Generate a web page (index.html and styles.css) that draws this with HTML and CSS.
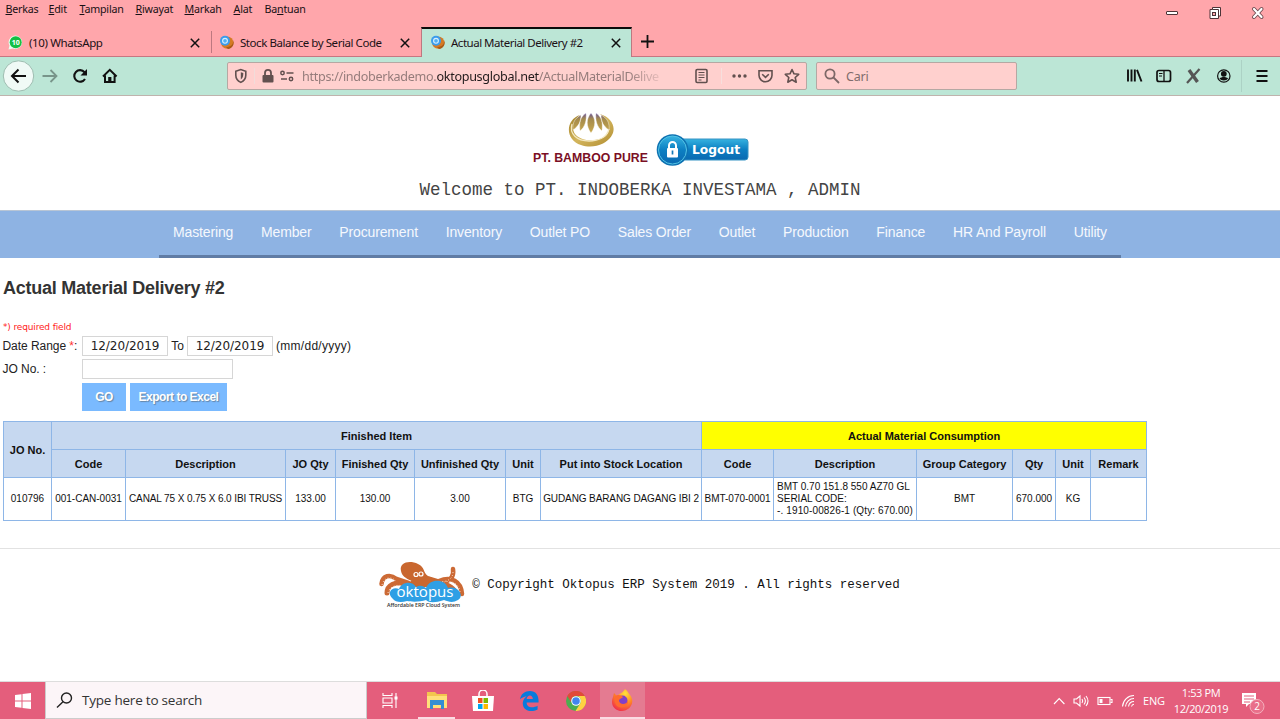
FILE: index.html
```html
<!DOCTYPE html>
<html lang="id">
<head>
<meta charset="utf-8">
<title>Actual Material Delivery #2</title>
<link rel="stylesheet" href="styles.css">
</head>
<body>
<svg class="defs" width="0" height="0" aria-hidden="true">
  <defs>
    <linearGradient id="gold" x1="0" y1="0" x2="1" y2="1"><stop offset="0" stop-color="#a07f28"/><stop offset=".5" stop-color="#d3b55c"/><stop offset="1" stop-color="#b08c30"/></linearGradient>
    <linearGradient id="leaf" x1="0" y1="0" x2="0" y2="1"><stop offset="0" stop-color="#67529b"/><stop offset=".3" stop-color="#a48a4c"/><stop offset="1" stop-color="#c9a84c"/></linearGradient>
    <linearGradient id="blue" x1="0" y1="0" x2="0" y2="1"><stop offset="0" stop-color="#36b2e0"/><stop offset=".5" stop-color="#0c7fc2"/><stop offset="1" stop-color="#0a69b1"/></linearGradient>
    <radialGradient id="fire" cx=".65" cy=".2" r=".9"><stop offset="0" stop-color="#ffe03c"/><stop offset=".5" stop-color="#ff8a25"/><stop offset="1" stop-color="#ef2450"/></radialGradient>
    <symbol id="x" viewBox="0 0 10 10"><path d="M.8.8l8.4 8.4M9.2.8L.8 9.2" stroke="#111" stroke-width="1.5"/></symbol>
    <symbol id="fav" viewBox="0 0 15 15"><circle cx="8.2" cy="7.600" r="6.200" fill="#d57a24"/><path d="M9 14a6.200 6.200 0 0 0 5-9c1 5-3 7-7 7z" fill="#a95a16"/><circle cx="6" cy="5.800" r="5" fill="#3b9cec"/><circle cx="6" cy="5.800" r="2.400" fill="#4fb0f5" stroke="#d7efff" stroke-width="1.100"/></symbol>
  </defs>
</svg>

<header class="browser">
  <div class="menubar">
    <nav class="menus">
      <span><u>B</u>erkas</span><span><u>E</u>dit</span><span><u>T</u>ampilan</span><span><u>R</u>iwayat</span><span><u>M</u>arkah</span><span><u>A</u>lat</span><span>Ba<u>n</u>tuan</span>
    </nav>
    <svg class="winbtns" width="104" height="16" viewBox="0 0 104 16">
      <rect x="3.500" y="6.500" width="11" height="3" rx=".5" fill="#fff" stroke="#4d3438"/>
      <path d="M49.500 2.500h8v8.500h-2v2.500h-8.500v-9h2.500z" fill="#fff" stroke="#4d3438"/><path d="M49.500 4.500h6v6.500" fill="none" stroke="#4d3438"/><rect x="49.500" y="7.500" width="3" height="3" fill="#ffa6ab" stroke="#4d3438"/>
      <path d="M91 4l7.500 8m0-8l-7.500 8" stroke="#6d4b50" stroke-width="4" stroke-linecap="round"/><path d="M91 4l7.500 8m0-8l-7.500 8" stroke="#fff" stroke-width="2.200" stroke-linecap="round"/>
    </svg>
  </div>

  <div class="tabs">
    <div class="tab tab-first">
      <svg class="fav" viewBox="0 0 15 15"><path d="M.5 14.500l1-4A6.700 6.700 0 1 1 5 13.500z" fill="#eafff0"/><circle cx="7.700" cy="7.200" r="6" fill="#12bf43"/><text x="7.700" y="9.900" text-anchor="middle" class="badge10">10</text></svg>
      <span class="title t-wa">(10) WhatsApp</span><svg class="close"><use href="#x"/></svg>
    </div>
    <div class="tab">
      <svg class="fav"><use href="#fav"/></svg><span class="title t-stock">Stock Balance by Serial Code</span><svg class="close"><use href="#x"/></svg>
    </div>
    <div class="tab active">
      <svg class="fav"><use href="#fav"/></svg><span class="title t-act">Actual Material Delivery #2</span><svg class="close"><use href="#x"/></svg>
    </div>
    <svg class="plus" viewBox="0 0 13 13"><path d="M6.500 0v13M0 6.500h13" stroke="#111" stroke-width="1.800"/></svg>
  </div>

  <div class="toolbar">
    <svg class="navicons" width="130" height="38" viewBox="0 0 130 38" fill="none">
      <circle cx="18.500" cy="19" r="15.200" fill="#f0faf6" stroke="#9dbdb0"/>
      <path d="M26 19H12.500M18.500 12.500L12 19l6.500 6.500" stroke="#111" stroke-width="2"/>
      <path d="M42.500 19H56M50.500 13l6 6-6 6" stroke="#78958a" stroke-width="1.800"/>
      <path d="M84.500 15.200A5.800 5.800 0 1 0 85 22" stroke="#111" stroke-width="2.100"/><path d="M87 12v6.500h-6.500z" fill="#111"/>
      <path d="M103 19.500l6.800-6.700 6.800 6.700M105 18.500V25h9.600v-6.500" stroke="#111" stroke-width="2"/><path d="M108.200 25v-5h3.200v5z" fill="#111"/>
    </svg>
    <div class="urlbar">
      <svg width="64" height="26" viewBox="0 0 64 26" fill="none" stroke="#62504f">
        <path d="M7.800 8.200l5-1.700 5 1.700v4c0 3.600-2.200 5.800-5 7.200-2.800-1.400-5-3.600-5-7.200z" stroke-width="1.600"/><path d="M12.800 9.300v7.200c2-1.300 2.500-3 2.500-6.400z" fill="#62504f" stroke="none"/>
        <path d="M26.500 5v16" stroke="#f1dcda"/>
        <rect x="34.500" y="12" width="11" height="7.500" rx="1" fill="#62504f" stroke="none"/><path d="M37 12V9.800a3 3 0 0 1 6 0V12" stroke-width="1.800"/>
        <circle cx="54.500" cy="10" r="1.700" stroke-width="1.500"/><path d="M58.500 10h7M53 16h6" stroke-width="1.700"/><circle cx="63" cy="16" r="1.700" stroke-width="1.500"/>
      </svg>
      <div class="url">https://indoberkademo.<b>oktopusglobal.net</b>/ActualMaterialDelive</div>
      <svg class="urlicons" width="112" height="26" viewBox="0 0 112 26" fill="none" stroke="#62504f" stroke-width="1.600">
        <rect x="2" y="6.500" width="11" height="13" rx="1.200"/><path d="M4.500 9.500h6M4.500 12h6M4.500 14.500h6M4.500 17h3" stroke-width="1"/>
        <path d="M27.500 5v16" stroke="#f7dfdd" stroke-width="1"/>
        <g fill="#62504f" stroke="none"><circle cx="40" cy="13" r="1.700"/><circle cx="45.500" cy="13" r="1.700"/><circle cx="51" cy="13" r="1.700"/></g>
        <path d="M65 7.800h13v4.500a6.500 6.500 0 0 1-13 0zM68.200 11.200l3.300 3.200 3.300-3.200"/>
        <path d="M98 6.500l2 4.300 4.700.5-3.500 3.200 1 4.700-4.200-2.400-4.200 2.400 1-4.700-3.500-3.200 4.700-.5z" stroke-linejoin="round"/>
      </svg>
    </div>
    <div class="searchbar">
      <svg width="16" height="16" viewBox="0 0 16 16" fill="none" stroke="#7d6867" stroke-width="1.800"><circle cx="6" cy="6" r="4.600"/><path d="M9.500 9.500l5.500 5.500"/></svg>
      <span>Cari</span>
    </div>
    <svg class="toolicons" width="155" height="38" viewBox="0 0 155 38" fill="none" stroke="#111">
      <path d="M3 12.500v12M6.500 12.500v12M9.800 12.500v12M12 12.800l4.500 11.700" stroke-width="1.900"/>
      <rect x="32" y="13.500" width="13.500" height="11" rx="2" stroke-width="1.700"/><path d="M39 13v11.500" stroke-width="1.300"/><path d="M34 16.500h3.500M34 19h3" stroke-width="1"/>
      <path d="M64 13L72.500 25" stroke="#555" stroke-width="3.400"/><path d="M74.500 12L62 26" stroke="#555" stroke-width="2.200"/>
      <circle cx="98.800" cy="19" r="6.200" stroke-width="1.200"/><circle cx="98.800" cy="16.800" r="2.900" fill="#111" stroke="none"/><path d="M94.500 21.500c2-2 6.600-2 8.600 0-1.500 2.600-7 2.600-8.600 0z" fill="#111" stroke="none"/>
      <path d="M116.500 3v32" stroke="#acd2c5"/>
      <path d="M131.500 14h11M131.500 19h11M131.500 24h11" stroke-width="1.900"/>
    </svg>
  </div>
</header>

<main class="page">
  <div class="brand">
    <div class="company">
      <svg width="50" height="36" viewBox="0 0 50 36">
        <path fill-rule="evenodd" d="M14 3C-1 8-1 28 15 33c7 2.500 15 2 22-1.500C53 23 50 7 34 2c7 6 11 12 8 19-5 9-26 10-33 1-4-6-2-13 5-19z" fill="url(#gold)"/>
        <path d="M6 12c-3 10 5 17 17 17 10 0 18-4 20-12" fill="none" stroke="#f3e8c1" stroke-width="1.300"/>
        <path d="M25 1c-5 6-5 13 0 20 5-7 5-14 0-20zM20 1c-6 4-7 10-6 18 5-4 7-11 6-18zM30 1c6 4 7 10 6 18-5-4-7-11-6-18zM15 3C9 6 6 11 7 18c6-4 8-9 8-15zM35 3c6 3 9 8 8 15-6-4-8-9-8-15z" fill="url(#leaf)" stroke="#fff" stroke-width=".4"/>
      </svg>
      <svg class="company-name" width="116" height="17" viewBox="0 0 116 17"><text x="0" y="13.500" textLength="115" lengthAdjust="spacingAndGlyphs">PT. BAMBOO PURE</text></svg>
    </div>
    <svg class="logout" width="94" height="34" viewBox="0 0 94 34">
      <rect x="18" y="6" width="74" height="21" rx="3" fill="url(#blue)" stroke="#3794c4"/>
      <circle cx="16.500" cy="17" r="15.800" fill="#0e72b2"/><circle cx="16.500" cy="17" r="14" fill="url(#blue)" stroke="#53c3e5" stroke-width="1"/>
      <rect x="11" y="15" width="11" height="9.500" rx="1" fill="#fff"/><path d="M13 15v-2.500a3.500 3.500 0 0 1 7 0V15" fill="none" stroke="#fff" stroke-width="2"/><path d="M16.500 17.500v4" stroke="#1479b8" stroke-width="1.700"/>
      <text x="36" y="21.300" class="logout-text" textLength="48" lengthAdjust="spacingAndGlyphs">Logout</text>
    </svg>
  </div>
  <div class="welcome">Welcome to PT. INDOBERKA INVESTAMA , ADMIN</div>

  <nav class="mainnav">
    <div class="navlist">
      <a>Mastering</a><a>Member</a><a>Procurement</a><a>Inventory</a><a>Outlet PO</a><a>Sales Order</a><a>Outlet</a><a>Production</a><a>Finance</a><a>HR And Payroll</a><a>Utility</a>
    </div>
  </nav>

  <section class="content">
    <h1>Actual Material Delivery #2</h1>
    <div class="required">*) required field</div>
    <div class="form">
      <div class="row"><label>Date Range <i>*</i>:</label><span class="field date">12/20/2019</span><span class="to">To</span><span class="field date">12/20/2019</span><span class="hint">(mm/dd/yyyy)</span></div>
      <div class="row"><label>JO No. :</label><span class="field jo"></span></div>
      <div class="row buttons"><button class="go">GO</button><button class="export">Export to Excel</button></div>
    </div>
    <table class="report">
      <colgroup><col class="w48"><col class="w74"><col class="w160"><col class="w50"><col class="w79"><col class="w91"><col class="w35"><col class="w161"><col class="w72"><col class="w143"><col class="w96"><col class="w43"><col class="w35"><col class="w56"></colgroup>
      <tr class="head"><th rowspan="2">JO No.</th><th colspan="7">Finished Item</th><th colspan="6" class="yellow">Actual Material Consumption</th></tr>
      <tr class="head"><th>Code</th><th>Description</th><th>JO Qty</th><th>Finished Qty</th><th>Unfinished Qty</th><th>Unit</th><th>Put into Stock Location</th><th>Code</th><th>Description</th><th>Group Category</th><th>Qty</th><th>Unit</th><th>Remark</th></tr>
      <tr class="data"><td>010796</td><td>001-CAN-0031</td><td class="tight">CANAL 75 X 0.75 X 6.0 IBI TRUSS</td><td>133.00</td><td>130.00</td><td>3.00</td><td>BTG</td><td class="tight">GUDANG BARANG DAGANG IBI 2</td><td>BMT-070-0001</td><td class="left">BMT 0.70 151.8 550 AZ70 GL<br>SERIAL CODE:<br><span class="wide">-. 1910-00826-1 (Qty: 670.00)</span></td><td>BMT</td><td>670.000</td><td>KG</td><td></td></tr>
    </table>
  </section>

  <footer class="foot">
    <svg class="octo" width="88" height="50" viewBox="0 0 88 50">
      <g fill="none" stroke="#cc6a35" stroke-linecap="round"><path d="M2.500 23c1-9 9-10 15-5l12 4" stroke-width="4.500"/><path d="M8 32c0-8 8-12 18-9" stroke-width="5"/><path d="M50 18c10 6 26 4 24-10" stroke-width="4.500"/><path d="M60 20c12-5 22 0 23 13" stroke-width="4.500"/><path d="M56 22c12 0 18 4 22 11" stroke-width="5"/><path d="M31 25l4-5M40 25l2-6" stroke-width="5"/></g>
      <path d="M3 24c2-8 9-9 14-4M9 32c1-6 8-9 15-7M74 11c0 8-8 11-16 9M81 31c-1-8-8-12-16-10" fill="none" stroke="#f6d9c6" stroke-width="1" stroke-dasharray="1 2"/>
      <path d="M22 10C20 1 31-1 39 3c7 3 5 9 10 12l10 3 2 8H26l7-6c-7-3-10-5-11-10z" fill="#c9672f"/>
      <circle cx="37" cy="13.500" r="2" fill="none" stroke="#fff" stroke-width="1.200"/><circle cx="42" cy="13" r="2" fill="none" stroke="#fff" stroke-width="1.200"/>
      <path d="M14 38c-7-6-1-13 6-10 3-8 14-8 17-2 5-3 9 0 10 1 4-10 19-9 22 0 10-3 17 8 10 12-5 3-9 2-14 0-9 3-15 3-18 0-6 2-14 2-19 1-6 2-12 1-14-2z" fill="#2e9fe5"/>
      <text x="17.500" y="36" class="okto" textLength="57" lengthAdjust="spacingAndGlyphs">oktopus</text>
      <text x="8" y="46" class="tagline" textLength="73" lengthAdjust="spacingAndGlyphs">Affordable ERP Cloud System</text>
    </svg>
    <span>© Copyright Oktopus ERP System 2019 . All rights reserved</span>
  </footer>
</main>

<div class="taskbar">
  <div class="start"><svg width="16" height="16" viewBox="0 0 16 16" fill="#fff"><path d="M0 2l6.500-.8v6.300H0zM7.500 1L16 0v7.500H7.500zM0 8.500h6.500v6.300L0 14zM7.500 8.500H16V16l-8.500-1z"/></svg></div>
  <div class="tasksearch"><svg width="17" height="17" viewBox="0 0 17 17" fill="none" stroke="#222" stroke-width="1.400"><circle cx="10.500" cy="6" r="5"/><path d="M7 9.700L1 15.500"/></svg><span>Type here to search</span></div>
  <div class="app"><svg width="16" height="15" viewBox="0 0 16 15" fill="none" stroke="#fff"><path d="M1 0v2.500h9V0M1 15v-2.500h9V15M1 5h9v5H1zM14 0v15" stroke-width="1.100"/><rect x="12.500" y="3.500" width="3" height="3" fill="#fff" stroke="none"/></svg></div>
  <div class="app running"><svg width="20" height="19" viewBox="0 0 20 19"><path d="M0 1h8l2 2h10v14H0z" fill="#f3c64e"/><path d="M0 5h20v12H0z" fill="#ffe07a"/><path d="M3 9h14v9h-3v-4H6v4H3z" fill="#358ed4"/></svg></div>
  <div class="app"><svg width="22" height="22" viewBox="0 0 22 22"><path d="M7 7V4a4 4 0 0 1 8 0v3" fill="none" stroke="#fff" stroke-width="1.500"/><path d="M0 6h22l-1 15H1z" fill="#fff"/><path d="M6 8h4.500v5H6z" fill="#f25022"/><path d="M11.500 8H16v5h-4.500z" fill="#7fba00"/><path d="M6 14h4.500v5H6z" fill="#00a4ef"/><path d="M11.500 14H16v5h-4.500z" fill="#ffb900"/></svg></div>
  <div class="app"><svg width="19" height="20" viewBox="0 0 20 21"><path d="M0 9C1 3 5 0 10.500 0 17 0 20 5 19.500 12H7c0 6 7 6 11.500 3.500v4C12 23 2 21 3 12c.4-3 2-5 4-6.500C4 6 1.500 7 0 9zm7-.5h6.500c0-5-6-5-6.500 0z" fill="#087bdc"/></svg></div>
  <div class="app"><svg width="20" height="20" viewBox="0 0 20 20"><circle cx="10" cy="10" r="10" fill="#4cad50"/><path d="M1.300 5A10 10 0 0 1 18.700 5H10a5 5 0 0 0-4.500 7z" fill="#e24a38"/><path d="M18.700 5A10 10 0 0 1 9.500 20l5-8c1-3 0-5-2.500-7z" fill="#ffd142"/><circle cx="10" cy="10" r="4.800" fill="#fff"/><circle cx="10" cy="10" r="3.800" fill="#4285ef"/></svg></div>
  <div class="app current"><svg width="22" height="22" viewBox="0 0 22 22"><path d="M14 0c3 2 3 4 5 6 6 8-1 16-8 16C3 22-1 15 2 8l1-4 3 3c3-3 6-3 8-7z" fill="url(#fire)"/><circle cx="11.500" cy="11.500" r="5" fill="#8140c9"/><path d="M4 7c4-2 6-1 8 1-1 2-4 1-4 4 1 4 7 4 9 0 1 6-7 8-11 5-2-2-3-6-2-10z" fill="#ff6a30"/></svg></div>
  <div class="tray">
    <svg width="86" height="20" viewBox="0 0 86 20" fill="none" stroke="#fff" stroke-width="1.100">
      <path d="M1 13l5.200-5.500 5.200 5.500"/>
      <path d="M21 8h2.500L27 5v10l-3.500-3H21zM29 8q1.500 2 0 4M31 6.500q2.800 3.500 0 7M33 5q4 5 0 10"/>
      <rect x="45" y="6.500" width="12" height="7"/><path d="M57.500 8.500H59v3h-1.500"/><path d="M46.500 8h3v4h-3z" fill="#fff" stroke="none"/>
      <path d="M69.500 15.500C70 9 75 4.500 81 4.500M72.500 15.500c.5-4.500 4-8 8.500-8M75.500 15.500c.5-3 2.500-5 5.500-5M78.500 15.500c.3-1.300 1.200-2.200 2.500-2.200"/>
    </svg>
    <span class="lang">ENG</span>
    <div class="clock"><span>1:53 PM</span><span>12/20/2019</span></div>
    <svg class="notice" width="26" height="24" viewBox="0 0 26 24"><path d="M1 2h14v11H8l-3 3v-3H1z" fill="#fff"/><path d="M3 5h10M3 8h10M3 11h6" stroke="#e45e7c"/><circle cx="16" cy="15.500" r="7" fill="#e96f8a" stroke="#f4b0bd"/><text x="16" y="19" text-anchor="middle" class="two">2</text></svg>
  </div>
</div>
</body>
</html>
```
FILE: styles.css
```css
* { box-sizing: border-box; }
body { margin: 0; width: 1280px; height: 719px; overflow: hidden; display: flex; flex-direction: column; background: #fff; font-family: "Liberation Sans", Arial, sans-serif; color: #222; white-space: nowrap; }
svg { display: block; flex: none; }
.defs { position: absolute; }

.browser { height: 96px; font-family: "Noto Sans", sans-serif; background: #ffa6ab; flex: none; border-bottom: 2px solid #bfb3ad; }
.menubar { height: 27px; display: flex; justify-content: space-between; align-items: flex-start; }
.menus { display: grid; grid-template-columns: 43px 31px 56px 49px 49px 31px 60px; padding: 2px 0 0 5.5px; font-size: 10.7px; line-height: 15px; color: #181014; letter-spacing: -.2px; }
.menus u { text-underline-offset: 1px; }
.winbtns { margin: 5px 13px 0 0; }

.tabs { height: 30px; display: flex; border-bottom: 1px solid #c67681; }
.tab { width: 210px; height: 30px; display: flex; align-items: center; padding: 1px 10px 0 8px; color: #1c1116; position: relative; }
.tab-first { width: 211px; }
.tab-first + .tab::before { content: ""; position: absolute; left: 0; top: 4px; height: 22px; border-left: 1px solid #bd7880; }
.tab.active { width: 211px; background: #bce6d6; border-top: 2px solid #0b0b0b; border-left: 1px solid #bd7880; border-right: 1px solid #bd7880; padding: 0 9px 1px 8px; }
.fav { width: 15px; height: 15px; margin-right: 6px; }
.tab .title { font-size: 11.5px; flex: 1; }
.t-wa { letter-spacing: -.38px; }
.t-stock { letter-spacing: -.44px; }
.t-act { letter-spacing: -.49px; }
.close { width: 10px; height: 10px; margin-right: 1px; }
.badge10 { font: bold 7px "Open Sans", sans-serif; fill: #fff; }
.plus { width: 13px; height: 13px; margin: 8px 0 0 9px; }

.toolbar { height: 38px; background: #bce6d6; display: flex; align-items: center; }
.navicons { margin-right: 97px; }
.urlbar, .searchbar { height: 28px; border: 1px solid #b5a8a3; border-radius: 2px; background: #ffd0ce; display: flex; align-items: center; }
.urlbar { width: 580px; overflow: hidden; }
.urlbar > svg:first-child { overflow: visible; }
.url { margin-left: 10px; width: 366px; font-size: 12.6px; letter-spacing: -.31px; color: #957c7b; -webkit-mask-image: linear-gradient(to right, #000 325px, transparent 366px); }
.url b { font-weight: 400; color: #211a1b; }
.urlicons { margin-left: 27px; }
.searchbar { width: 201px; margin-left: 9px; padding-left: 7px; gap: 6px; font-size: 12.5px; letter-spacing: -.2px; color: #806c6c; }
.toolicons { margin-left: 108px; }

.page { flex: 1; display: flex; flex-direction: column; }
.brand { display: flex; justify-content: center; padding-top: 16px; height: 79px; gap: 7px; }
.company { display: flex; flex-direction: column; align-items: center; width: 116px; margin-left: 3px; }
.company-name { font-weight: bold; font-size: 12.500px; fill: #7b0f25; }
.logout { margin-top: 21px; }
.logout-text { font: bold 13px "DejaVu Sans", sans-serif; fill: #fff; }
.welcome { font-family: "Liberation Mono", monospace; font-size: 17.5px; height: 35px; line-height: 30px; text-align: center; color: #444; }
.mainnav { height: 48px; background: #8eb3e3; border-top: 1px solid #b8c5d5; display: flex; justify-content: center; }
.navlist { height: 47px; border-bottom: 3px solid #607ca5; padding: 0 14px; width: 962px; display: flex; justify-content: space-between; font-size: 14px; letter-spacing: -.14px; line-height: 42px; color: #f5f8fd; }

.content { padding: 0 3px; height: 291px; border-bottom: 1px solid #e2e2e2; flex: none; }
h1 { margin: 19px 0 0; height: 43px; font-size: 18px; line-height: 22px; color: #333; letter-spacing: -.24px; }
.required { height: 14px; font: 9px/14px "DejaVu Sans", sans-serif; color: #f22; letter-spacing: -.15px; }
.row { display: flex; height: 23px; align-items: center; font-size: 12px; }
.row label { width: 79px; letter-spacing: -.05px; margin-left: -.5px; margin-right: .5px; }
.row i { color: #f33; font-style: normal; }
.field { border: 1px solid #d6d6d6; height: 20px; display: flex; align-items: center; justify-content: center; }
.date { width: 86px; font: 12px "DejaVu Sans", sans-serif; letter-spacing: -.05px; }
.to { width: 19px; text-align: center; }
.hint { margin-left: 3px; letter-spacing: .28px; }
.jo { width: 151px; }
.buttons { height: 34px; padding: 0 0 0 79px; gap: 4px; }
button { border: 0; height: 28px; padding: 0; background: #7abaff; color: #fff; font: bold 12px "Liberation Sans", sans-serif; text-shadow: 1px 1px 1px #6685a5; letter-spacing: -.58px; }
.go { width: 44px; }
.export { width: 97px; letter-spacing: -.5px; }

.report { border-collapse: collapse; table-layout: fixed; width: 1144px; margin-top: 7px; color: #111; }
.report th, .report td { border: 1px solid #8eb6e7; padding: 0; text-align: center; }
.head { height: 28px; font-size: 11px; background: #c6d8f0; }
.head .yellow { background: #ff0; }
.data { height: 43px; font-size: 10px; line-height: 12px; }
.report .left { text-align: left; padding-left: 3px; }
.report .tight { letter-spacing: -.1px; }
.wide { letter-spacing: .12px; }
.w48 { width: 48px; } .w74 { width: 74px; } .w160 { width: 160px; } .w50 { width: 50px; } .w79 { width: 79px; } .w91 { width: 91px; } .w35 { width: 35px; } .w161 { width: 161px; } .w72 { width: 72px; } .w143 { width: 143px; } .w96 { width: 96px; } .w43 { width: 43px; } .w56 { width: 56px; }

.foot { display: flex; justify-content: center; gap: 5px; padding: 12px 1px 0 0; font: 12.5px/48px "Liberation Mono", monospace; color: #111; }
.octo { overflow: visible; }
.okto { font: 15px "Open Sans", sans-serif; fill: #fff; }
.tagline { font: 600 6px "Open Sans", sans-serif; fill: #333; }

.taskbar { height: 38px; background: #e45e7c; border-top: 1px solid #ddd; display: flex; flex: none; font-family: "Open Sans", sans-serif; }
.start { width: 45px; display: flex; align-items: center; justify-content: center; }
.tasksearch { width: 322px; background: #fcf5f8; border: 1px solid #ccc; border-top: 0; display: flex; align-items: center; gap: 9px; padding-left: 10px; font-size: 13.5px; color: #333; letter-spacing: -.22px; }
.app { width: 46.5px; display: flex; align-items: center; justify-content: center; }
.running { background: linear-gradient(#fbdce3, #fbdce3) center bottom / 37px 2px no-repeat; }
.current { width: 45px; background: #e47b91; border-bottom: 2px solid #fbdce3; }
.tray { margin-left: auto; display: flex; align-items: center; color: #fff; font-size: 11px; }
.lang { margin-left: 4px; width: 27px; letter-spacing: -.2px; }
.clock { width: 62px; display: flex; flex-direction: column; align-items: center; line-height: 16px; letter-spacing: -.4px; }
.notice { margin: 4px 13px 0 9px; }
.two { font: 10px "Open Sans", sans-serif; fill: #fff; }
```
